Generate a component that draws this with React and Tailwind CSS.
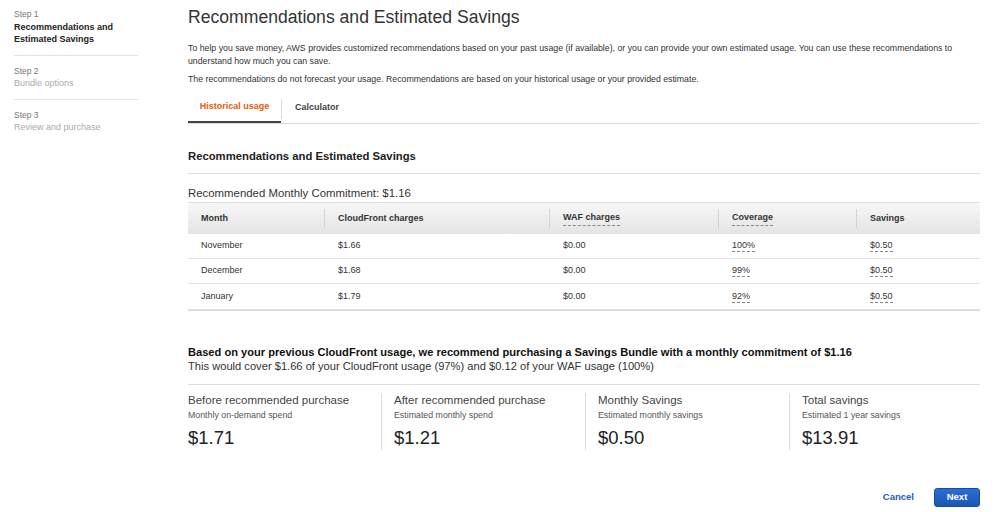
const ROWS = [
  { month: 'November', cf: '$1.66', waf: '$0.00', cov: '100%', save: '$0.50' },
  { month: 'December', cf: '$1.68', waf: '$0.00', cov: '99%', save: '$0.50' },
  { month: 'January', cf: '$1.79', waf: '$0.00', cov: '92%', save: '$0.50' },
];

const STATS = [
  { title: 'Before recommended purchase', sub: 'Monthly on-demand spend', value: '$1.71' },
  { title: 'After recommended purchase', sub: 'Estimated monthly spend', value: '$1.21' },
  { title: 'Monthly Savings', sub: 'Estimated monthly savings', value: '$0.50' },
  { title: 'Total savings', sub: 'Estimated 1 year savings', value: '$13.91' },
];

const COLS = 'grid grid-cols-[137px_225px_169px_138px_1fr]';

function Dotted({ children }) {
  return <span className="border-b border-dashed border-[#888] pb-px">{children}</span>;
}

function Sidebar() {
  return (
    <div className="w-[124px] ml-[14px] shrink-0 pt-[8px]">
      <p className="text-[8.5px] leading-[12px] text-[#777]">Step 1</p>
      <p className="text-[9px] font-bold text-[#222] leading-[12px] mt-[1px]">Recommendations and Estimated Savings</p>
      <div className="border-t border-[#e4e4e4] mt-[10px]" />
      <p className="text-[8.5px] leading-[12px] text-[#777] mt-[9px]">Step 2</p>
      <p className="text-[9px] leading-[12px] text-[#aaa]">Bundle options</p>
      <div className="border-t border-[#e4e4e4] mt-[10px]" />
      <p className="text-[8.5px] leading-[12px] text-[#777] mt-[9px]">Step 3</p>
      <p className="text-[9px] leading-[12px] text-[#aaa]">Review and purchase</p>
    </div>
  );
}

export default function App() {
  return (
    <div className="w-[1000px] h-[512px] bg-white flex font-['Liberation_Sans',Arial,sans-serif] text-[#333] overflow-hidden">
      <Sidebar />
      <div className="ml-[50px] w-[792px] flex flex-col">
        <h1 className="text-[17.6px] text-[#333] leading-[24px] mt-[5px]">Recommendations and Estimated Savings</h1>
        <p className="text-[8.75px] leading-[13px] mt-[13px] text-[#333]">
          To help you save money, AWS provides customized recommendations based on your past usage (if available), or you can provide your own estimated usage. You can use these recommendations to understand how much you can save.
        </p>
        <p className="text-[8.75px] leading-[13px] mt-[5px] text-[#333]">
          The recommendations do not forecast your usage. Recommendations are based on your historical usage or your provided estimate.
        </p>

        {/* Tabs */}
        <div className="flex mt-[7px] border-b border-[#ddd]">
          <div className="w-[93px] h-[30px] flex items-center justify-center border-b-2 border-[#444] -mb-px">
            <span className="text-[9px] font-bold text-[#e7590c]">Historical usage</span>
          </div>
          <div className="flex items-start pt-[6px]">
            <div className="w-px h-[20px] bg-[#ddd]" />
          </div>
          <div className="px-[13px] h-[30px] flex items-center">
            <span className="text-[9px] font-bold text-[#444]">Calculator</span>
          </div>
        </div>

        <h2 className="text-[11.3px] font-bold text-[#222] mt-[25px] leading-[14px]">Recommendations and Estimated Savings</h2>
        <div className="border-t border-[#ddd] mt-[10px]" />
        <p className="text-[11.4px] text-[#333] mt-[12px] leading-[14px]">Recommended Monthly Commitment: $1.16</p>

        {/* Table */}
        <div className="mt-[2px] border-b-2 border-[#ddd]">
          <div className={`${COLS} h-[32px] items-center bg-gradient-to-b from-[#f7f7f7] to-[#e4e4e4] border-t border-[#ddd] text-[9px] font-bold text-[#333]`}>
            <div className="pl-[13px] h-[20px] flex items-center border-r border-[#d4d4d4]">Month</div>
            <div className="pl-[13px] h-[20px] flex items-center border-r border-[#d4d4d4]">CloudFront charges</div>
            <div className="pl-[13px] h-[20px] flex items-center border-r border-[#d4d4d4]"><Dotted>WAF charges</Dotted></div>
            <div className="pl-[13px] h-[20px] flex items-center border-r border-[#d4d4d4]"><Dotted>Coverage</Dotted></div>
            <div className="pl-[13px] h-[20px] flex items-center">Savings</div>
          </div>
          {ROWS.map((r, i) => (
            <div key={r.month} className={`${COLS} h-[25px] items-center text-[9px] text-[#333] ${i < ROWS.length - 1 ? 'border-b border-[#e2e2e2]' : ''}`}>
              <div className="pl-[13px]">{r.month}</div>
              <div className="pl-[13px]">{r.cf}</div>
              <div className="pl-[13px]">{r.waf}</div>
              <div className="pl-[13px]"><Dotted>{r.cov}</Dotted></div>
              <div className="pl-[13px]"><Dotted>{r.save}</Dotted></div>
            </div>
          ))}
        </div>

        {/* Recommendation summary */}
        <p className="text-[11.1px] font-bold text-[#111] mt-[34px] leading-[14px]">
          Based on your previous CloudFront usage, we recommend purchasing a Savings Bundle with a monthly commitment of $1.16
        </p>
        <p className="text-[11.15px] text-[#333] leading-[15px]">
          This would cover $1.66 of your CloudFront usage (97%) and $0.12 of your WAF usage (100%)
        </p>
        <div className="border-t border-[#ddd] mt-[10px]" />

        <div className="grid grid-cols-[193px_204px_204px_1fr] mt-[8px]">
          {STATS.map((s, i) => (
            <div key={s.title} className={`h-[57px] ${i > 0 ? 'border-l border-[#ddd] pl-[12px]' : ''}`}>
              <p className="text-[11.5px] text-[#444] leading-[14px]">{s.title}</p>
              <p className="text-[8.8px] text-[#555] mt-[3px] leading-[11px]">{s.sub}</p>
              <p className="text-[18.5px] text-[#222] mt-[6px] leading-[22px]">{s.value}</p>
            </div>
          ))}
        </div>

        {/* Footer */}
        <div className="flex justify-end items-center gap-[20px] mt-[38px]">
          <button className="text-[9.5px] font-bold text-[#1f5bb8]">Cancel</button>
          <button className="w-[46px] h-[19px] rounded-[3px] bg-gradient-to-b from-[#2a6fd3] to-[#1a56b4] border border-[#1a4c9c] text-[9.5px] font-bold text-white">Next</button>
        </div>
      </div>
    </div>
  );
}
